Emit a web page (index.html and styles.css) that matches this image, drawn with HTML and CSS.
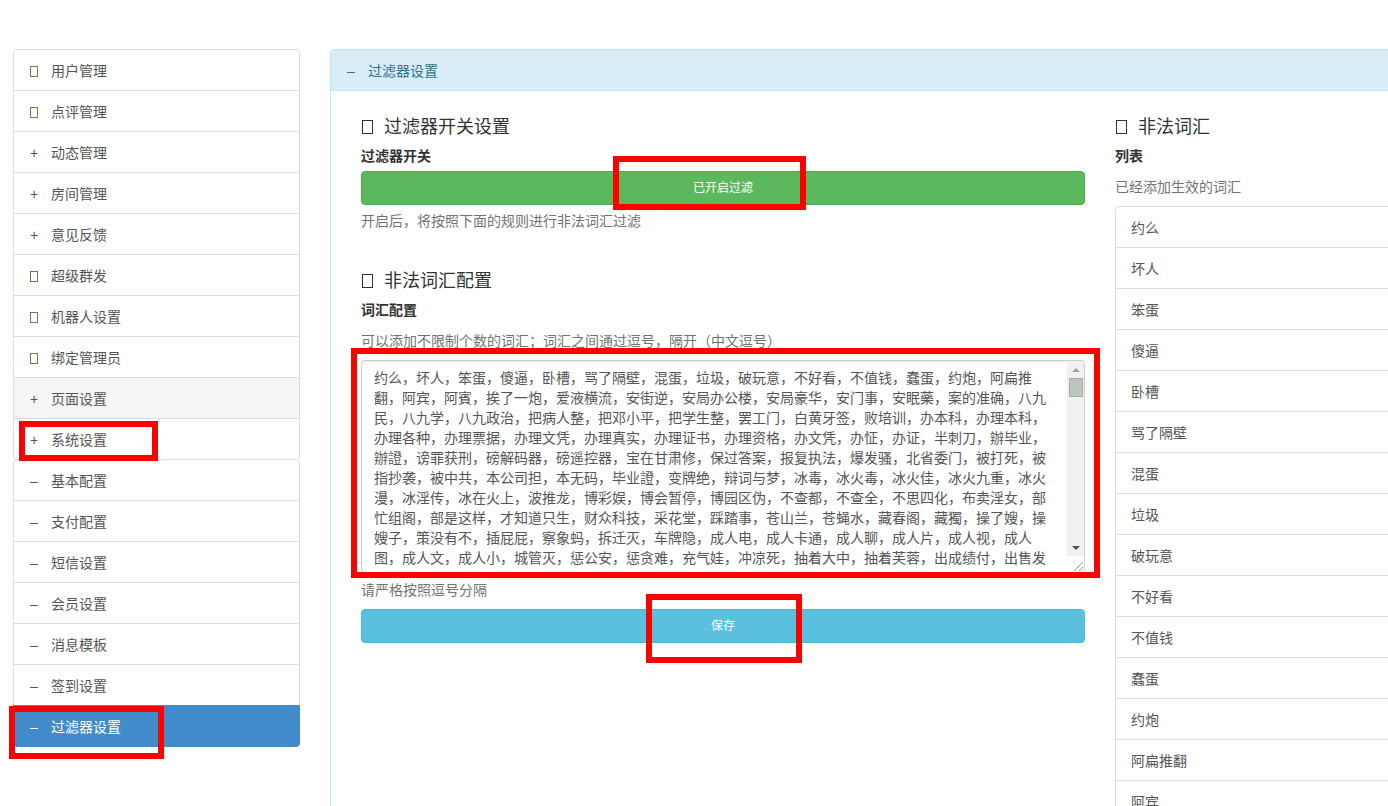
FILE: index.html
```html
<!DOCTYPE html>
<html lang="zh-CN">
<head>
    <meta charset="UTF-8">
    <title>过滤器设置</title>
    <link rel="stylesheet" href="styles.css">
</head>
<body>
    <div class="page">
        <!-- 左侧菜单 -->
        <div class="sidebar">
            <ul class="menu">
                <li class="menu-item"><span class="tofu"></span><span>用户管理</span></li>
                <li class="menu-item"><span class="tofu"></span><span>点评管理</span></li>
                <li class="menu-item"><span class="sign">+</span><span>动态管理</span></li>
                <li class="menu-item"><span class="sign">+</span><span>房间管理</span></li>
                <li class="menu-item"><span class="sign">+</span><span>意见反馈</span></li>
                <li class="menu-item"><span class="tofu"></span><span>超级群发</span></li>
                <li class="menu-item"><span class="tofu"></span><span>机器人设置</span></li>
                <li class="menu-item"><span class="tofu"></span><span>绑定管理员</span></li>
                <li class="menu-item hover"><span class="sign">+</span><span>页面设置</span></li>
                <li class="menu-item"><span class="sign">+</span><span>系统设置</span></li>
            </ul>
            <ul class="menu submenu">
                <li class="menu-item"><span class="sign">–</span><span>基本配置</span></li>
                <li class="menu-item"><span class="sign">–</span><span>支付配置</span></li>
                <li class="menu-item"><span class="sign">–</span><span>短信设置</span></li>
                <li class="menu-item"><span class="sign">–</span><span>会员设置</span></li>
                <li class="menu-item"><span class="sign">–</span><span>消息模板</span></li>
                <li class="menu-item"><span class="sign">–</span><span>签到设置</span></li>
                <li class="menu-item active"><span class="sign">–</span><span>过滤器设置</span></li>
            </ul>
        </div>

        <!-- 主面板 -->
        <div class="panel">
            <div class="panel-heading"><span class="sign">–</span><span>过滤器设置</span></div>
            <div class="panel-body">
                <div class="col-left">
                    <h4 class="title"><span class="tofu"></span>过滤器开关设置</h4>
                    <label class="field-label">过滤器开关</label>
                    <button class="btn btn-success">已开启过滤</button>
                    <p class="help first-help">开启后，将按照下面的规则进行非法词汇过滤</p>

                    <h4 class="title second-title"><span class="tofu"></span>非法词汇配置</h4>
                    <label class="field-label">词汇配置</label>
                    <p class="help word-help">可以添加不限制个数的词汇；词汇之间通过逗号，隔开（中文逗号）</p>
                    <div class="word-box">
                        <div class="word-text">约么，坏人，笨蛋，傻逼，卧槽，骂了隔壁，混蛋，垃圾，破玩意，不好看，不值钱，蠢蛋，约炮，阿扁推翻，阿宾，阿賓，挨了一炮，爱液横流，安街逆，安局办公楼，安局豪华，安门事，安眠藥，案的准确，八九民，八九学，八九政治，把病人整，把邓小平，把学生整，罢工门，白黄牙签，败培训，办本科，办理本科，办理各种，办理票据，办理文凭，办理真实，办理证书，办理资格，办文凭，办怔，办证，半刺刀，辦毕业，辦證，谤罪获刑，磅解码器，磅遥控器，宝在甘肃修，保过答案，报复执法，爆发骚，北省委门，被打死，被指抄袭，被中共，本公司担，本无码，毕业證，变牌绝，辩词与梦，冰毒，冰火毒，冰火佳，冰火九重，冰火漫，冰淫传，冰在火上，波推龙，博彩娱，博会暂停，博园区伪，不查都，不查全，不思四化，布卖淫女，部忙组阁，部是这样，才知道只生，财众科技，采花堂，踩踏事，苍山兰，苍蝇水，藏春阁，藏獨，操了嫂，操嫂子，策没有不，插屁屁，察象蚂，拆迁灭，车牌隐，成人电，成人卡通，成人聊，成人片，成人视，成人图，成人文，成人小，城管灭，惩公安，惩贪难，充气娃，冲凉死，抽着大中，抽着芙蓉，出成绩付，出售发</div>
                        <div class="scrollbar">
                            <div class="scroll-track">
                                <span class="arrow-up"></span>
                                <span class="scroll-thumb"></span>
                                <span class="arrow-down"></span>
                            </div>
                            <div class="scroll-corner">
                                <svg width="12" height="12" viewBox="0 0 12 12"><path d="M2 11 L11 2 M7 11 L11 7" stroke="#999" fill="none"/></svg>
                            </div>
                        </div>
                    </div>
                    <p class="help save-help">请严格按照逗号分隔</p>
                    <button class="btn btn-info">保存</button>
                </div>

                <div class="col-right">
                    <h4 class="title"><span class="tofu"></span>非法词汇</h4>
                    <label class="field-label">列表</label>
                    <p class="help list-help">已经添加生效的词汇</p>
                    <ul class="menu word-list">
                        <li class="menu-item">约么</li>
                        <li class="menu-item">坏人</li>
                        <li class="menu-item">笨蛋</li>
                        <li class="menu-item">傻逼</li>
                        <li class="menu-item">卧槽</li>
                        <li class="menu-item">骂了隔壁</li>
                        <li class="menu-item">混蛋</li>
                        <li class="menu-item">垃圾</li>
                        <li class="menu-item">破玩意</li>
                        <li class="menu-item">不好看</li>
                        <li class="menu-item">不值钱</li>
                        <li class="menu-item">蠢蛋</li>
                        <li class="menu-item">约炮</li>
                        <li class="menu-item">阿扁推翻</li>
                        <li class="menu-item">阿宾</li>
                    </ul>
                </div>
            </div>
        </div>
    </div>

    <!-- 截图上的红色标注框 -->
    <div class="mark mark-switch"></div>
    <div class="mark mark-words"></div>
    <div class="mark mark-save"></div>
    <div class="mark mark-system"></div>
    <div class="mark mark-filter"></div>
</body>
</html>
```

FILE: styles.css
```css
html, body {
    margin: 0;
    padding: 0;
    height: 806px;
    overflow: hidden;
    background-color: #fff;
}
body {
    font-family: "Liberation Sans", "Noto Sans CJK SC", sans-serif;
    font-size: 14px;
    line-height: 20px;
    color: #333;
}
.page {
    display: flex;
    gap: 30px;
    padding: 49px 0 0 13px;
    width: 1600px;
}
.sidebar {
    flex: 0 0 287px;
}
.menu {
    list-style: none;
    margin: 0;
    padding: 0;
}
.menu-item {
    display: flex;
    align-items: center;
    padding: 11px 15px 9px;
    margin-bottom: -1px;
    background-color: #fff;
    border: 1px solid #ddd;
    color: #555;
}
.menu .menu-item:first-child {
    border-top-left-radius: 4px;
    border-top-right-radius: 4px;
}
.menu .menu-item:last-child {
    margin-bottom: 0;
    border-bottom-left-radius: 4px;
    border-bottom-right-radius: 4px;
}
.menu-item.hover {
    background-color: #f5f5f5;
}
.menu-item.active {
    background-color: #428bca;
    border-color: #428bca;
    color: #fff;
}
.submenu {
    margin-top: -1px;
}
.sign {
    flex: 0 0 22px;
    padding-left: 1px;
    box-sizing: border-box;
}
.tofu {
    box-sizing: border-box;
    width: 8px;
    height: 11px;
    border: 1px solid #8a6d4b;
    margin-left: 1px;
    margin-right: 13px;
    flex: none;
}
.panel {
    flex: 0 0 1163px;
    height: 1000px;
    box-sizing: border-box;
    border: 1px solid #bce8f1;
    border-radius: 4px;
}
.panel-heading {
    display: flex;
    padding: 11px 15px 9px;
    background-color: #d9edf7;
    border-bottom: 1px solid #bce8f1;
    color: #31708f;
}
.panel-heading .sign {
    padding-left: 1px;
}
.panel-body {
    display: grid;
    grid-template-columns: 724px 347px;
    gap: 30px;
    padding: 26px 30px 0;
}
.title {
    display: flex;
    align-items: center;
    margin: 0;
    font-size: 18px;
    font-weight: 400;
    line-height: 20px;
    color: #333;
}
.title .tofu {
    width: 11px;
    height: 14px;
    border-color: #333;
    margin-right: 11px;
}
.second-title {
    margin-top: 40px;
}
.field-label {
    display: block;
    margin-top: 9px;
    font-weight: 700;
}
.help {
    margin: 0;
    color: #737373;
}
.first-help {
    margin-top: 6px;
}
.word-help {
    margin-top: 11px;
}
.list-help {
    margin-top: 11px;
}
.save-help {
    margin-top: 7px;
}
.btn {
    display: block;
    width: 100%;
    height: 34px;
    margin-top: 5px;
    padding: 0;
    font: inherit;
    font-size: 12px;
    color: #fff;
    border: 1px solid transparent;
    border-radius: 4px;
}
.btn-success {
    background-color: #5cb85c;
    border-color: #4cae4c;
}
.btn-info {
    margin-top: 9px;
    background-color: #5bc0de;
    border-color: #46b8da;
}
.word-box {
    display: flex;
    height: 213px;
    margin-top: 9px;
    box-sizing: border-box;
    border: 1px solid #ccc;
    border-radius: 4px;
    box-shadow: inset 0 1px 1px rgba(0, 0, 0, 0.075);
    overflow: hidden;
}
.word-text {
    flex: 1;
    padding: 7px 12px;
    overflow: hidden;
    color: #555;
}
.scrollbar {
    flex: 0 0 17px;
    display: flex;
    flex-direction: column;
}
.scroll-track {
    flex: 1;
    display: flex;
    flex-direction: column;
    align-items: center;
    padding-top: 7px;
    background-color: #f1f1f1;
}
.arrow-up {
    width: 0;
    height: 0;
    border-left: 4px solid transparent;
    border-right: 4px solid transparent;
    border-bottom: 4px solid #a3a3a3;
}
.scroll-thumb {
    box-sizing: border-box;
    width: 14px;
    height: 19px;
    margin-top: 6px;
    background-color: #bcc6bf;
    border: 1px solid #a8a8a0;
}
.arrow-down {
    width: 0;
    height: 0;
    margin-top: auto;
    margin-bottom: 6px;
    border-left: 4px solid transparent;
    border-right: 4px solid transparent;
    border-top: 4px solid #505050;
}
.scroll-corner {
    height: 16px;
    display: flex;
    align-items: flex-end;
    justify-content: flex-end;
    background-color: #fff;
}
.word-list {
    margin-top: 9px;
}
.mark {
    position: absolute;
    box-sizing: border-box;
    border: 6px solid #f00;
}
.mark-switch {
    left: 613px;
    top: 156px;
    width: 193px;
    height: 54px;
}
.mark-words {
    left: 351px;
    top: 348px;
    width: 749px;
    height: 230px;
}
.mark-save {
    left: 646px;
    top: 594px;
    width: 156px;
    height: 69px;
}
.mark-system {
    left: 19px;
    top: 421px;
    width: 139px;
    height: 40px;
}
.mark-filter {
    left: 9px;
    top: 706px;
    width: 155px;
    height: 53px;
}
```
